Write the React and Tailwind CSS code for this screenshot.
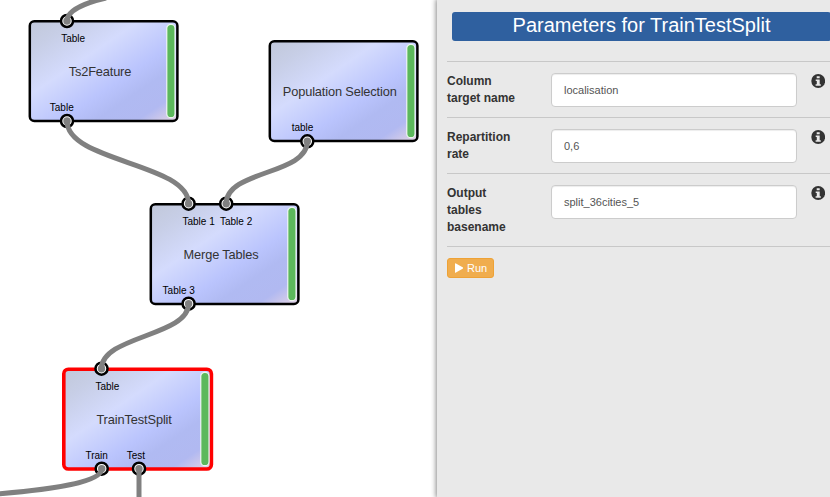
const NODES = [
  {
    x: 28, y: 20, title: "Ts2Feature", tx: 40.8, tl: 62.5,
    labels: [{ t: "Table", x: 33.2, y: 22 }, { t: "Table", x: 21.8, y: 91 }],
  },
  {
    x: 268.3, y: 40, title: "Population Selection", tx: 14.8, tl: 114,
    labels: [{ t: "table", x: 23.7, y: 91 }],
  },
  {
    x: 149.2, y: 202.7, title: "Merge Tables", tx: 34.6, tl: 75,
    labels: [
      { t: "Table 1", x: 33.5, y: 22 },
      { t: "Table 2", x: 71, y: 22 },
      { t: "Table 3", x: 13.6, y: 91 },
    ],
  },
  {
    x: 62.2, y: 367.7, title: "TrainTestSplit", tx: 34.4, tl: 75.5, selected: true,
    labels: [
      { t: "Table", x: 33.4, y: 22 },
      { t: "Train", x: 23.4, y: 91 },
      { t: "Test", x: 64.8, y: 91 },
    ],
  },
];

const PORTS = [
  [67, 21], [67, 121], [307.3, 141.3], [188.6, 203.7], [226.2, 203.7],
  [188.6, 303.7], [101.5, 368.7], [101.7, 468.7], [139, 468.7],
];

const LINKS = [
  "M67 21C67 11 84 3 106 -2",
  "M67 121C67 162 188.6 163 188.6 203.7",
  "M307.3 141.3C307.3 175 226.2 170 226.2 203.7",
  "M188.6 303.7C188.6 336 101.5 336 101.5 368.7",
  "M101.7 468.7C101.7 482 55 489 -4 494",
  "M139 468.7V500",
];

const FIELDS = [
  { label: "Column target name", value: "localisation", h: "h-14" },
  { label: "Repartition rate", value: "0,6", h: "h-14" },
  { label: "Output tables basename", value: "split_36cities_5", h: "h-[73px]" },
];

function Node({ node }) {
  return (
    <div className="absolute h-[104px] w-[152px]" style={{ left: node.x, top: node.y }}>
      <svg className="absolute inset-0 overflow-visible" width="152" height="104">
        <rect
          x="1.8" y="1.2" width="147.6" height="99.8" rx="4.5"
          fill="url(#nodeFill)"
          stroke={node.selected ? "#ff0000" : "#000000"}
          strokeWidth={node.selected ? 3.6 : 2.5}
        />
        <rect x="138.8" y="4.3" width="8.2" height="93.4" rx="4" fill="#5cb85c" stroke="#ffffff" strokeOpacity="0.85" strokeWidth="1.2" />
        <text x={node.tx} y="56" fontSize="12.8" textLength={node.tl} fill="#333333">{node.title}</text>
        {node.labels.map((l, i) => (
          <text key={i} x={l.x} y={l.y} fontSize="10" fill="#000000">{l.t}</text>
        ))}
      </svg>
    </div>
  );
}

function Diagram() {
  return (
    <main className="relative h-full w-[437px] shrink-0 overflow-hidden bg-white">
      <svg className="absolute" width="0" height="0">
        <defs>
          <linearGradient id="nodeFill" x1="0" y1="0" x2="1" y2="1">
            <stop offset="0" stopColor="#c1c8da" />
            <stop offset="0.15" stopColor="#c7cee6" />
            <stop offset="0.37" stopColor="#d4dbfd" />
            <stop offset="0.6" stopColor="#bac4fd" />
            <stop offset="0.72" stopColor="#b0baf2" />
            <stop offset="0.86" stopColor="#b1b9f1" />
            <stop offset="1" stopColor="#e6d5e4" />
          </linearGradient>
        </defs>
      </svg>
      {NODES.map((n) => <Node key={n.title} node={n} />)}
      <svg className="absolute inset-0" width="437" height="497">
        {PORTS.map(([x, y], i) => (
          <circle key={i} cx={x} cy={y} r="6" fill="#ffffff" stroke="#000000" strokeWidth="2.5" />
        ))}
        {PORTS.map(([x, y], i) => <circle key={i} cx={x} cy={y} r="3.7" fill="#808080" />)}
        {LINKS.map((d) => <path key={d} d={d} fill="none" stroke="#808080" strokeWidth="5" />)}
      </svg>
    </main>
  );
}

function InfoIcon() {
  return (
    <svg className="mt-px ml-[14px] size-[14px] shrink-0" viewBox="0 0 14 14">
      <circle cx="7.2" cy="7" r="6.9" fill="#333333" />
      <path d="M5.7 2.2h3v2.1h-3zM4.7 5.6h4v4.7h1.1v1.5H4.6v-1.5h1.2V7.1H4.7z" fill="#e9e9e9" />
    </svg>
  );
}

export default function App() {
  return (
    <div className="flex h-[497px] w-[830px] overflow-hidden bg-white font-['Liberation_Sans',Arial,sans-serif] text-[#333333]">
      <Diagram />
      <aside className="relative flex min-w-0 flex-1 flex-col bg-[#e9e9e9] pl-[10px] pt-3 shadow-[0_0_5px_1px_#888888]">
        <h1 className="ml-[5px] h-[29px] w-[379px] shrink-0 rounded-[3px] bg-[#2f609f] text-center text-xl leading-[27px] text-white">
          Parameters for TrainTestSplit
        </h1>
        <div className="mt-5 border-b border-[#c8c8c8]">
          {FIELDS.map((f) => (
            <div key={f.label} className={`flex shrink-0 border-t border-[#c8c8c8] pt-[11px] ${f.h}`}>
              <label className="w-[104px] shrink-0 pr-8 text-xs leading-[17px] font-bold">{f.label}</label>
              <input
                className="h-[34px] w-[246px] shrink-0 rounded-[4px] border border-[#cccccc] bg-white px-3 text-[11px] text-[#555555] shadow-[inset_0_1px_1px_rgba(0,0,0,0.075)]"
                defaultValue={f.value}
              />
              <InfoIcon />
            </div>
          ))}
        </div>
        <button className="mt-[11px] flex h-5 w-[47px] shrink-0 items-center gap-1 rounded-[3px] border border-[#eea236] bg-[#f0ad4e] pl-[7px] text-[11px] text-white">
          <svg className="h-[10px] w-2 shrink-0" viewBox="0 0 8 10">
            <path d="M0 0.4Q0 0 0.5 0.2L8 4.6Q8.3 5 8 5.4L0.5 9.8Q0 10 0 9.6z" fill="#ffffff" />
          </svg>
          Run
        </button>
      </aside>
    </div>
  );
}
